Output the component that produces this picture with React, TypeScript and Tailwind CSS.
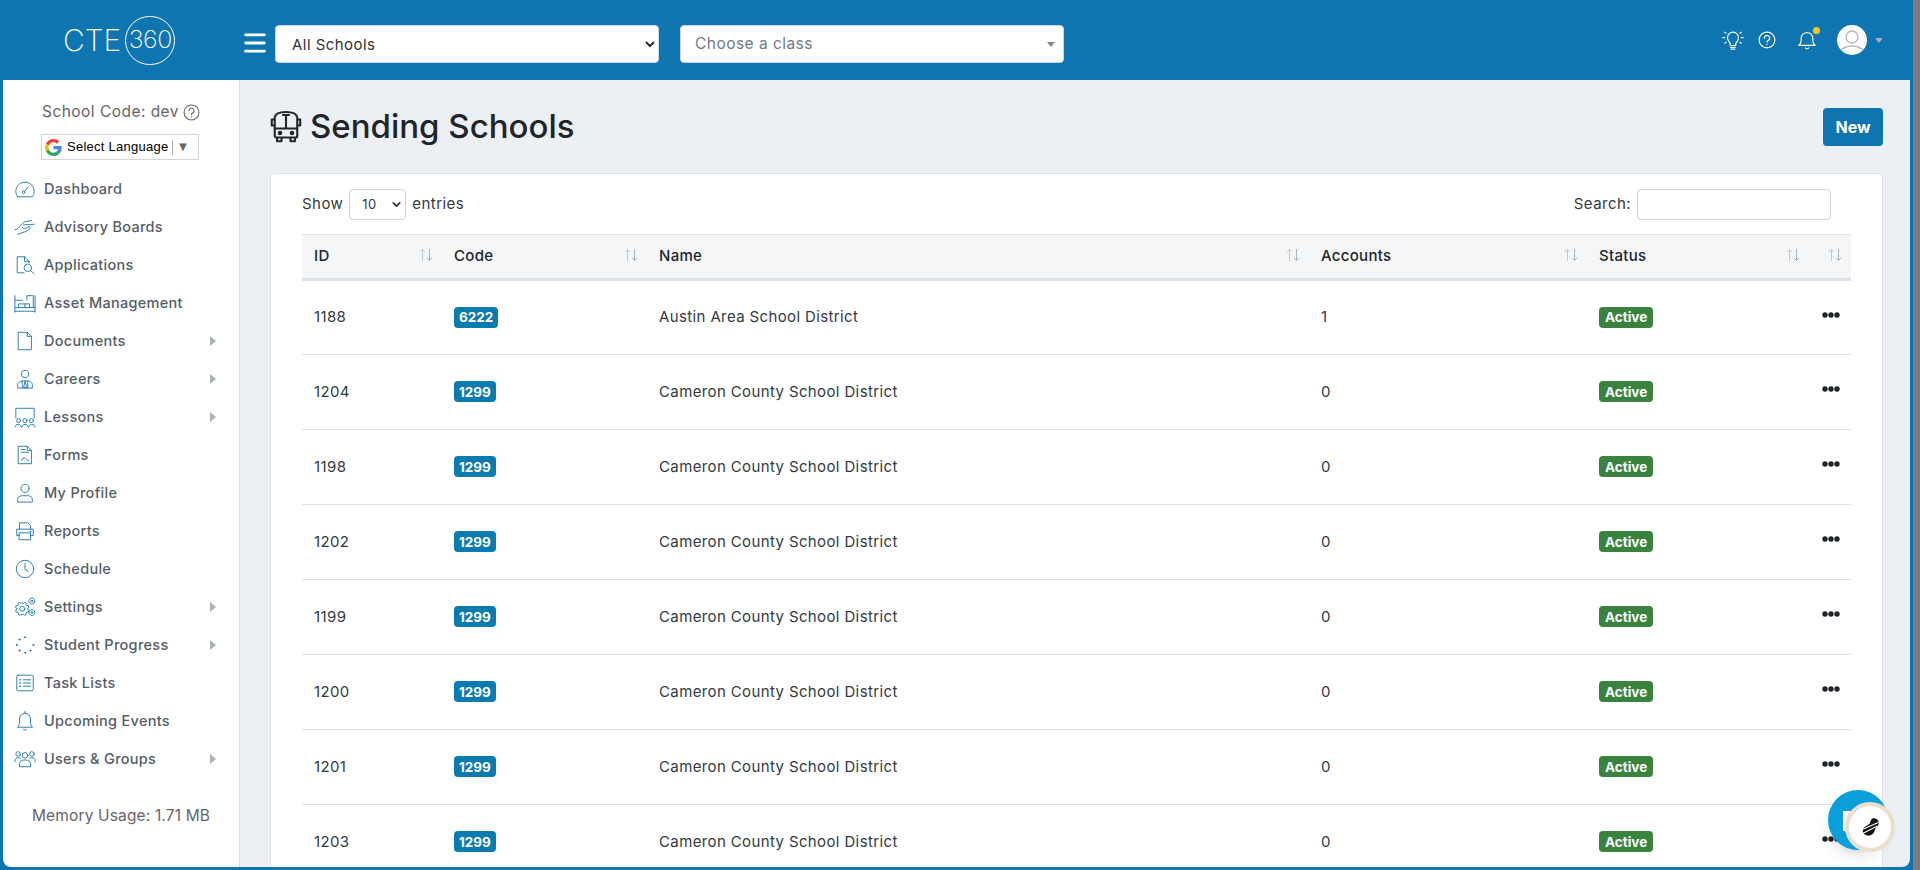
import { ChevronDown, Menu } from "lucide-react";
import type { ReactNode } from "react";

const schools = [
  { id: 1188, code: "6222", name: "Austin Area School District", accounts: 1 },
  { id: 1204, code: "1299", name: "Cameron County School District", accounts: 0 },
  { id: 1198, code: "1299", name: "Cameron County School District", accounts: 0 },
  { id: 1202, code: "1299", name: "Cameron County School District", accounts: 0 },
  { id: 1199, code: "1299", name: "Cameron County School District", accounts: 0 },
  { id: 1200, code: "1299", name: "Cameron County School District", accounts: 0 },
  { id: 1201, code: "1299", name: "Cameron County School District", accounts: 0 },
  { id: 1203, code: "1299", name: "Cameron County School District", accounts: 0 },
];

function NavSvg({ children }: { children: ReactNode }) {
  return (
    <svg viewBox="0 0 24 24" fill="none" stroke="#1f77b0" strokeWidth="1" strokeLinecap="round" strokeLinejoin="round" className="h-[22px] w-[22px] shrink-0">
      {children}
    </svg>
  );
}

const navItems: { label: string; arrow?: boolean; icon: ReactNode }[] = [
  {
    label: "Dashboard",
    icon: (
      <>
        <path d="M4 20.500h16c1.200-1.600 2-3.700 2-6C22 9 17.500 4.500 12 4.500S2 9 2 14.500c0 2.300.8 4.400 2 6z" />
        <circle cx="10.500" cy="15.500" r="1.300" />
        <path d="M11.500 14.500L15 10" />
      </>
    ),
  },
  {
    label: "Advisory Boards",
    icon: (
      <>
        <path d="M1 15c3-.5 4-2 6-4.500 2-2.500 4-4 6-4.500l6-1" />
        <path d="M10 10c2-1 6-1 8-.5l4-.5" />
        <path d="M9 12.500c1 1.500 3 1.500 5 .5l3-1.500c1 0 1 1.500 0 2.500-1.500 2-3.500 3-6 3.500L4 20" />
      </>
    ),
  },
  {
    label: "Applications",
    icon: (
      <>
        <path d="M11 20.500H3.500V3h8l5 5v1.500" />
        <path d="M11.500 3v5h5" />
        <circle cx="15" cy="15" r="4" />
        <path d="M18 18l4 3.500" />
      </>
    ),
  },
  {
    label: "Asset Management",
    icon: (
      <>
        <path d="M1 4v18M23 4v18M1 9h8M1 17h22M1 21h22" />
        <path d="M14 9V4h7v13" />
        <path d="M5 17v-4h7v4M12 13h5v4" />
      </>
    ),
  },
  {
    label: "Documents",
    arrow: true,
    icon: <path d="M5 2.500h9.500L19 7v14.500H5zM14.500 2.500V7H19" />,
  },
  {
    label: "Careers",
    arrow: true,
    icon: (
      <>
        <circle cx="12" cy="6.500" r="4" />
        <path d="M4 21.500v-3.500c0-2.500 3-4 8-4s8 1.500 8 4v3.500zM9 14.500v7M15 14.500v7M12 14.500l-1.500 7h3z" />
      </>
    ),
  },
  {
    label: "Lessons",
    arrow: true,
    icon: (
      <>
        <path d="M2 13V2.500h20V13" />
        <circle cx="5" cy="16" r="2.200" />
        <circle cx="12" cy="16" r="2.200" />
        <circle cx="19" cy="16" r="2.200" />
        <path d="M1 23c0-4 7-4 7 0M8.500 23c0-4 7-4 7 0M16 23c0-4 7-4 7 0" />
      </>
    ),
  },
  {
    label: "Forms",
    icon: (
      <>
        <path d="M5 2.500h9.500L19 7v14.500H5zM14.500 2.500V7H19" />
        <path d="M8 6h4M8 9h8M8 18c2 0 2-3.500 3-3.500s1 3 5 3.500" />
      </>
    ),
  },
  {
    label: "My Profile",
    icon: (
      <>
        <circle cx="12" cy="7" r="4.500" />
        <path d="M4 21.500v-2.500c0-2.500 2-4 4.500-4h7c2.500 0 4.500 1.500 4.500 4v2.500z" />
      </>
    ),
  },
  {
    label: "Reports",
    icon: (
      <>
        <path d="M6 10V3h9l3 3v4" />
        <path d="M6 17H3v-7h18v7h-3" />
        <path d="M6 14h12v7.500H6z" />
        <path d="M17.500 12.500h1" />
      </>
    ),
  },
  {
    label: "Schedule",
    icon: (
      <>
        <circle cx="12" cy="12" r="9.500" />
        <path d="M12 6v6.500l3.500 2" />
      </>
    ),
  },
  {
    label: "Settings",
    arrow: true,
    icon: (
      <>
        <path d="M9 7.500l1.500.5 1-1.200 2 1.200-.5 1.500 1 1 1.500-.3.800 2.300-1.300.8v1.400l1.300.8-.8 2.300-1.500-.3-1 1 .5 1.500-2 1.200-1-1.200-1.500.5-1.500-.5-1 1.200-2-1.200.5-1.500-1-1-1.500.3-.8-2.300 1.300-.8v-1.400l-1.300-.8.8-2.300 1.500.3 1-1-.5-1.500 2-1.200 1 1.200z" />
        <circle cx="9" cy="14" r="2.700" />
        <circle cx="19.500" cy="5.500" r="3.200" strokeDasharray="2 .8" />
        <circle cx="19.500" cy="5.500" r="1" />
        <circle cx="19.500" cy="18" r="3.200" strokeDasharray="2 .8" />
        <circle cx="19.500" cy="18" r="1" />
      </>
    ),
  },
  {
    label: "Student Progress",
    arrow: true,
    icon: (
      <>
        <circle cx="12" cy="3.500" r=".7" />
        <circle cx="6" cy="6" r=".7" />
        <circle cx="3" cy="12" r=".7" />
        <circle cx="6" cy="18" r=".7" />
        <circle cx="12" cy="20.500" r=".7" />
        <circle cx="18" cy="18" r=".7" />
        <circle cx="21" cy="12" r=".7" />
      </>
    ),
  },
  {
    label: "Task Lists",
    icon: (
      <>
        <rect x="3" y="3.500" width="18" height="17" rx="1.500" />
        <path d="M10 8.500h8M10 12h8M10 15.500h8" />
        <path d="M6.500 8.500h.5M6.500 12h.5M6.500 15.500h.5" strokeWidth="1.600" />
      </>
    ),
  },
  {
    label: "Upcoming Events",
    icon: (
      <>
        <path d="M4 18.500c1.500-1.500 2-3 2-5.500V10c0-3.500 2.500-6.500 6-6.500s6 3 6 6.500v3c0 2.500.5 4 2 5.500z" />
        <path d="M12 1.500v2M10 21c.5 1.300 3.500 1.300 4 0" />
      </>
    ),
  },
  {
    label: "Users & Groups",
    arrow: true,
    icon: (
      <>
        <circle cx="12" cy="8" r="3" />
        <circle cx="4.500" cy="6.500" r="2.500" />
        <circle cx="19.500" cy="6.500" r="2.500" />
        <path d="M6 20v-3c0-2 2-4 6-4s6 2 6 4v3z" />
        <path d="M1 15v-1c0-2 1.500-3.500 3.500-3.500 1 0 2 .3 2.500 1M23 15v-1c0-2-1.500-3.500-3.500-3.500-1 0-2 .3-2.500 1" />
      </>
    ),
  },
];

function Logo() {
  return (
    <div className="flex w-[240px] shrink-0 items-center pl-[63px] text-white">
      <span className="text-[30px] font-extralight leading-none">CTE</span>
      <span className="ml-[4px] flex h-[49px] w-[50px] items-center justify-center rounded-full border border-white text-[25px] font-extralight tracking-[-0.02em]">
        360
      </span>
    </div>
  );
}

function Header() {
  return (
    <header className="flex h-[80px] shrink-0 items-center text-white">
      <Logo />
      <Menu size={28} strokeWidth={2.4} className="ml-[1px] mt-[6px] shrink-0" />
      <select className="ml-[6px] mt-[8px] h-[38px] w-[384px] rounded border border-[#ced4da] bg-white pl-[12px] pr-[8px] text-[15px] tracking-[0.03em] text-[#333]">
        <option>All Schools</option>
      </select>
      <div className="ml-[21px] mt-[8px] flex h-[38px] w-[384px] items-center justify-between rounded border border-[#ced4da] bg-white pl-[14px] pr-[8px] text-[15.500px] tracking-[0.03em] text-[#6f7b88]">
        Choose a class
        <span className="h-0 w-0 border-x-[4px] border-t-[5px] border-x-transparent border-t-[#888]" />
      </div>
      <div className="ml-auto flex items-center pr-[30px]">
        <svg viewBox="0 0 24 24" fill="none" stroke="white" strokeWidth="1.300" strokeLinecap="round" className="h-[22px] w-[22px]">
          <path d="M9 18v-2c0-1-3-3-3-6.500a6 6 0 0 1 12 0C18 13 15 15 15 16v2zM9.500 20h5M10 22h4M1 9.500h2M21 9.500h2M3 3.500l1.500 1M21 3.500l-1.500 1M3 15.500l1.500-1M21 15.500l-1.500-1" />
        </svg>
        <svg viewBox="0 0 24 24" fill="none" stroke="white" strokeWidth="1.600" strokeLinecap="round" className="ml-[14px] h-[18px] w-[18px]">
          <circle cx="12" cy="12" r="10.500" />
          <path d="M8.500 9.500a3.500 3.500 0 1 1 5 3.200c-1 .5-1.500 1-1.500 2.300M12 18v.2" />
        </svg>
        <div className="relative ml-[21px] h-[20px] w-[20px]">
          <svg viewBox="0 0 24 24" fill="none" stroke="#f4f1c0" strokeWidth="1.500" strokeLinecap="round" strokeLinejoin="round" className="h-[20px] w-[20px]">
            <path d="M2 18.500c2-1.500 3-3 3-6V10c0-4 3-7 7-7s7 3 7 7v2.500c0 3 1 4.500 3 6zM10 21.500c.5 1 3.500 1 4 0" />
          </svg>
          <span className="absolute right-[-3px] top-[-3px] h-[7px] w-[7px] rounded-full bg-[#fbc02d]" />
        </div>
        <div className="ml-[20px] h-[30px] w-[30px] overflow-hidden rounded-full bg-white">
          <svg viewBox="0 0 30 30" fill="none" stroke="#b5b8bc" strokeWidth="1.300" className="h-[30px] w-[30px]">
            <circle cx="15" cy="12" r="6" />
            <path d="M3 27c3-5 7-6 12-6s9 1 12 6" />
          </svg>
        </div>
        <span className="ml-[8px] h-0 w-0 border-x-[4px] border-t-[5px] border-x-transparent border-t-[#a9a6d8]" />
      </div>
    </header>
  );
}

function GoogleG() {
  return (
    <svg viewBox="0 0 48 48" className="h-[17px] w-[17px] shrink-0">
      <path fill="#EA4335" d="M24 9.500c3.500 0 6.700 1.200 9.200 3.600l6.900-6.900C35.900 2.400 30.500 0 24 0 14.600 0 6.500 5.400 2.600 13.200l8 6.200C12.500 13.700 17.800 9.500 24 9.500z" />
      <path fill="#4285F4" d="M47 24.500c0-1.600-.1-3.100-.4-4.500H24v9h13c-.6 3-2.300 5.500-4.800 7.200l7.700 6C44.400 37.900 47 31.800 47 24.500z" />
      <path fill="#FBBC05" d="M10.600 28.600c-.5-1.400-.8-3-.8-4.600s.3-3.200.8-4.600l-8-6.200C.9 16.500 0 20.100 0 24s.9 7.500 2.600 10.800l8-6.200z" />
      <path fill="#34A853" d="M24 48c6.500 0 11.900-2.100 15.900-5.800l-7.700-6c-2.200 1.400-4.900 2.300-8.200 2.300-6.200 0-11.500-4.200-13.400-9.900l-8 6.200C6.500 42.600 14.600 48 24 48z" />
    </svg>
  );
}

function Sidebar() {
  return (
    <aside className="flex w-[237px] shrink-0 flex-col border-r border-[#d8dce2] bg-white">
      <div className="mt-[20px] flex items-center justify-center gap-[4px] text-[15.500px] leading-[24px] tracking-[0.03em] text-[#666]">
        School Code: dev
        <svg viewBox="0 0 24 24" fill="none" stroke="#666" strokeWidth="1.500" strokeLinecap="round" className="h-[17px] w-[17px]">
          <circle cx="12" cy="12" r="10.500" />
          <path d="M8.500 9.500a3.500 3.500 0 1 1 5 3.200c-1 .5-1.500 1-1.500 2.300M12 18v.2" />
        </svg>
      </div>
      <div className="ml-[38px] mt-[10px] flex h-[26px] w-[158px] items-center border border-[#d5d5d5] pl-[3px] font-['Liberation_Sans',sans-serif] text-[13px] text-black">
        <GoogleG />
        <span className="ml-[5px] whitespace-nowrap tracking-[0.02em]">Select Language</span>
        <span className="ml-[4px] h-[15px] w-px bg-[#aaa]" />
        <span className="ml-[3px] text-[13px] text-[#666]">▼</span>
      </div>
      <nav className="mt-[10px] flex flex-col">
        {navItems.map((item) => (
          <div key={item.label} className="flex h-[38px] items-center pl-[11px] pr-[23px] text-[#555d66]">
            <NavSvg>{item.icon}</NavSvg>
            <span className="ml-[8px] text-[14.500px] font-medium tracking-[0.02em]">{item.label}</span>
            {item.arrow && (
              <span className="ml-auto h-0 w-0 border-y-[5px] border-l-[6px] border-y-transparent border-l-[#aab2b9]" />
            )}
          </div>
        ))}
      </nav>
      <div className="mt-[26px] text-center text-[15.500px] tracking-[0.01em] text-[#666]">Memory Usage: 1.71 MB</div>
    </aside>
  );
}

function SortIcon() {
  return (
    <svg viewBox="0 0 14 14" fill="none" stroke="#c4c8cd" strokeWidth="1" className="h-[14px] w-[14px]">
      <path d="M3.500 13V1.500M1 4l2.500-2.500L6 4" />
      <path d="M10.500 1v11.500M8 10l2.500 2.500L13 10" stroke="#aeb3b9" />
    </svg>
  );
}

function HeadCell({ label }: { label?: string }) {
  return (
    <th className="px-[12px] text-left text-[15px] font-medium tracking-[0.02em] text-[#212529]">
      <div className="flex items-center justify-between">
        <span>{label}</span>
        <span className="ml-auto -mr-[3px] -mt-[3px]">
          <SortIcon />
        </span>
      </div>
    </th>
  );
}

function SchoolsTable() {
  return (
    <table className="w-[1549px] table-fixed border-collapse text-[15px] tracking-[0.025em] text-[#333a42]">
      <colgroup>
        <col className="w-[140px]" />
        <col className="w-[205px]" />
        <col className="w-[662px]" />
        <col className="w-[278px]" />
        <col className="w-[222px]" />
        <col className="w-[42px]" />
      </colgroup>
      <thead>
        <tr className="h-[45px] border-b-[3px] border-t border-b-[#dee2e6] border-t-[#dee2e6] bg-[#f5f6f8]">
          <HeadCell label="ID" />
          <HeadCell label="Code" />
          <HeadCell label="Name" />
          <HeadCell label="Accounts" />
          <HeadCell label="Status" />
          <HeadCell />
        </tr>
      </thead>
      <tbody>
        {schools.map((s) => (
          <tr key={s.id} className="h-[75px] border-b border-[#dee2e6]">
            <td className="px-[12px]">{s.id}</td>
            <td className="px-[12px]">
              <span className="inline-flex h-[21px] items-center rounded bg-[#0a7bb0] px-[5px] text-[13.500px] font-bold tracking-normal text-white">{s.code}</span>
            </td>
            <td className="px-[12px]">{s.name}</td>
            <td className="px-[12px]">{s.accounts}</td>
            <td className="px-[12px]">
              <span className="inline-flex h-[21px] items-center rounded bg-[#3a833f] px-[6px] text-[13.500px] font-bold tracking-normal text-white">Active</span>
            </td>
            <td className="overflow-visible pl-[13px]">
              <svg viewBox="0 0 18 6" className="mb-[6px] h-[6px] w-[18px] fill-[#212529]">
                <circle cx="3" cy="3" r="2.700" />
                <circle cx="9" cy="3" r="2.700" />
                <circle cx="15" cy="3" r="2.700" />
              </svg>
            </td>
          </tr>
        ))}
      </tbody>
    </table>
  );
}

function SupportWidget() {
  return (
    <div className="absolute bottom-[20px] right-[25px] h-[60px] w-[60px]">
      <div className="absolute left-0 top-0 h-[60px] w-[60px] rounded-full bg-[#0a9fdb] shadow-lg" />
      <div className="absolute left-[15px] top-[21px] h-[20px] w-[20px] bg-white" />
      <div className="absolute bottom-[-2px] right-[-7px] flex h-[50px] w-[50px] items-center justify-center rounded-full border-[4px] border-[#eadfcd] bg-white">
        <svg viewBox="0 0 24 24" className="h-[22px] w-[22px]">
          <path d="M16 2.500c3.500 0 5.500 2.500 5.500 5.500 0 3-2.500 4-3.500 5.500s-1 4.500-3.500 6.500-6 2-8.500 0-2.500-6 0-8 5-2.500 6-4.500 1-5 4-5z" fill="#111" />
          <path d="M3 15L21 7M4 19L20 11" stroke="white" strokeWidth="1.200" />
        </svg>
      </div>
    </div>
  );
}

export default function App() {
  return (
    <div className="flex h-[870px] w-[1920px] overflow-hidden bg-[#7a7a80] font-[Inter,sans-serif]">
      <div className="relative flex h-full w-[1913px] shrink-0 flex-col bg-[#0f75b1]">
        <Header />
        <div className="mb-[3px] ml-[3px] mr-[3px] flex min-h-0 flex-1 overflow-hidden rounded-b-[8px]">
          <Sidebar />
          <main className="min-w-0 flex-1 overflow-hidden bg-[#eceff4] pl-[30px] pr-[27px]">
            <div className="flex h-[93px] items-center justify-between">
              <div className="flex items-center gap-[6px]">
                <svg viewBox="0 0 24 24" fill="none" stroke="#212529" strokeWidth="1.400" strokeLinecap="round" strokeLinejoin="round" className="-ml-[2px] h-[36px] w-[36px]">
                  <path d="M4.500 5.500C5 3 8 2 12 2s7 1 7.500 3.500V18a1 1 0 0 1-1 1h-13a1 1 0 0 1-1-1zM4.500 13h15M10 4h4M12 4v9M4.500 7H2.500v4h2M19.500 7h2v4h-2M6 19v2.500h3V19M15 19v2.500h3V19" />
                  <circle cx="8" cy="16" r=".8" fill="#212529" />
                  <circle cx="16" cy="16" r=".8" fill="#212529" />
                </svg>
                <h1 className="text-[33px] font-medium text-[#212529]">Sending Schools</h1>
              </div>
              <button className="h-[38px] w-[60px] rounded bg-[#0f75b1] text-[16px] font-bold text-white">New</button>
            </div>
            <div className="rounded border border-[#dfe3e8] bg-white pl-[31px] pt-[15px]">
              <div className="flex h-[45px] w-[1549px] items-start justify-between text-[15px] tracking-[0.03em] text-[#333a42]">
                <div className="flex items-center gap-[6px]">
                  Show
                  <div className="relative">
                    <select className="h-[31px] w-[57px] appearance-none rounded border border-[#ced4da] bg-white pl-[12px] text-[13px]">
                      <option>10</option>
                    </select>
                    <ChevronDown size={13} strokeWidth={3} className="absolute right-[3px] top-[9px] text-[#333]" />
                  </div>
                  entries
                </div>
                <div className="mr-[20px] flex items-center gap-[6px]">
                  Search:
                  <input className="h-[31px] w-[194px] rounded border border-[#ced4da] bg-white" />
                </div>
              </div>
              <SchoolsTable />
            </div>
          </main>
        </div>
        <SupportWidget />
      </div>
    </div>
  );
}
